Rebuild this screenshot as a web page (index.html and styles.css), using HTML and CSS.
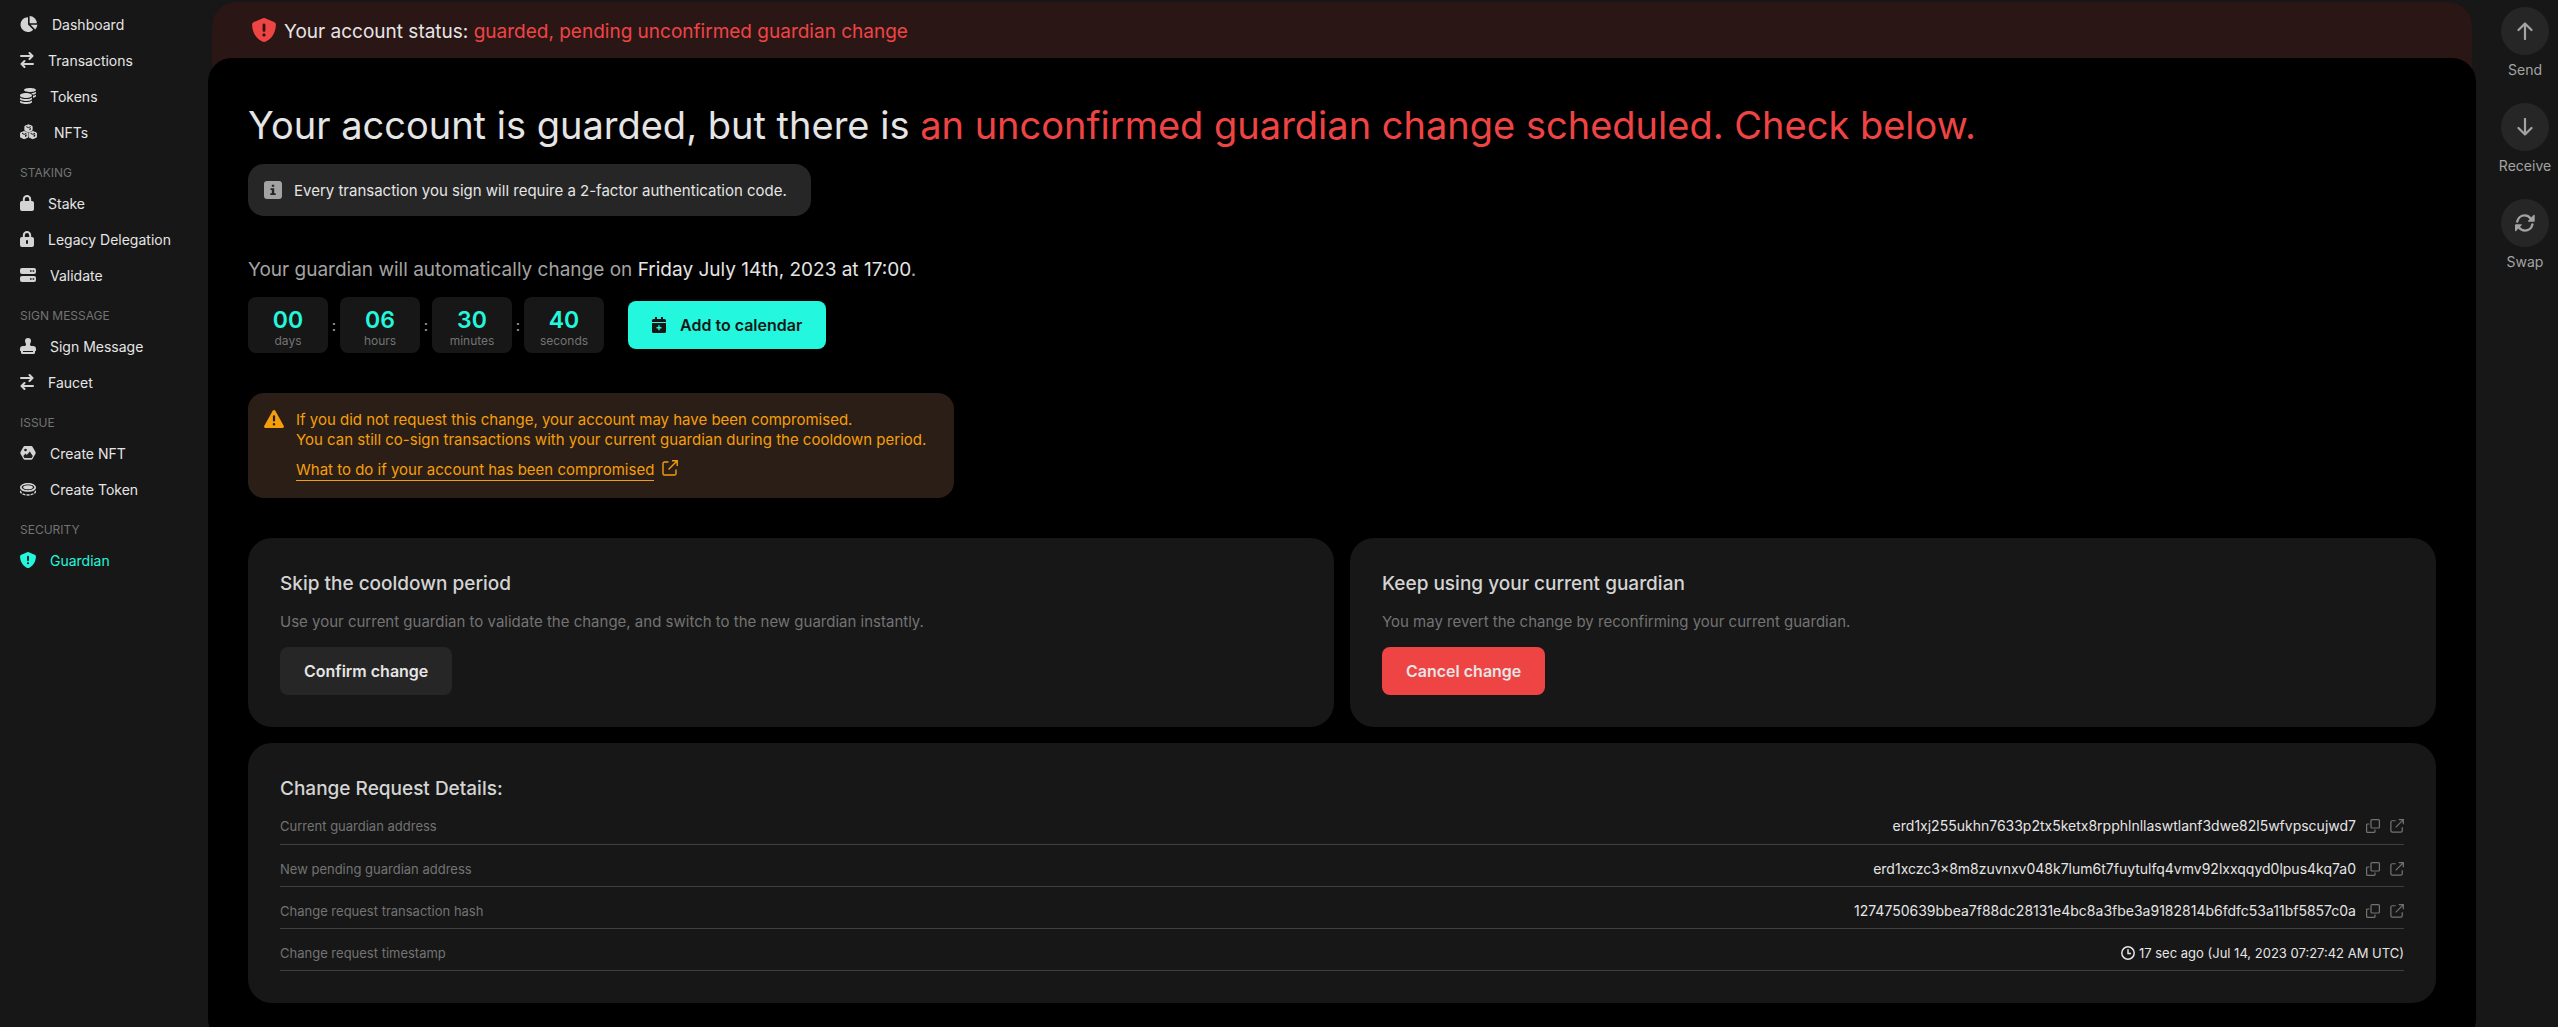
FILE: index.html
```html
<!DOCTYPE html>
<html lang="en">
<head>
<meta charset="utf-8">
<meta name="viewport" content="width=device-width, initial-scale=1">
<title>Guardian</title>
<link rel="stylesheet" href="styles.css">
</head>
<body>
<svg class="sprite" aria-hidden="true">
  <symbol id="i-pie" viewBox="0 0 18 16"><path d="M8 1.2V8.6l5.2 5.2A7.4 7.4 0 1 1 8 1.2z"/><path d="M9.6 0A7.3 7.3 0 0 1 16.8 7.2H9.6z"/><path d="M10.6 8.8H17.400A7.300 7.300 0 0 1 15.200 13.400z"/></symbol>
  <symbol id="i-swap" viewBox="0 0 14 16"><path d="M1 4h11M9.500 1l3 3-3 3M13 12H2M4.500 9l-3 3 3 3" fill="none" stroke="currentColor" stroke-width="2" stroke-linecap="round" stroke-linejoin="round"/></symbol>
  <symbol id="i-coins" viewBox="0 0 512 512"><path d="M0 405.300V448c0 35.300 86 64 192 64s192-28.700 192-64v-42.700C342.700 434.400 267.200 448 192 448S41.300 434.400 0 405.300zM320 128c106 0 192-28.700 192-64S426 0 320 0 128 28.700 128 64s86 64 192 64zM0 300.400V352c0 35.300 86 64 192 64s192-28.700 192-64v-51.600c-41.300 34-116.900 51.600-192 51.600S41.300 334.400 0 300.400zm416 11c57.300-11.100 96-31.700 96-55.400v-42.700c-23.200 16.400-57.300 27.600-96 34.500v63.600zM192 160C86 160 0 195.800 0 240s86 80 192 80 192-35.800 192-80-86-80-192-80zm219.300 56.300c60-10.800 100.700-32 100.700-56.300v-42.700c-35.500 25.100-96.500 38.600-160.700 41.800 29.500 14.300 51.200 33.500 60 57.200z"/></symbol>
  <symbol id="i-cubes" viewBox="0 0 20 16"><g stroke-linejoin="round"><path d="M8.500.8l3.600 1.400v4.200L8.500 8 4.900 6.400V2.200zM4.200 7.500l3.600 1.400v4.300l-3.600 1.500-3.600-1.500V8.900zM12.800 7.500l3.600 1.400v4.300l-3.600 1.500-3.600-1.500V8.900z" stroke="currentColor"/><path d="M6.300 2.700l2.200.9 2.200-.9M2 9.400l2.200.9 2.200-.9M10.600 9.400l2.200.9 2.200-.9" fill="none" stroke="#171717" stroke-width="1"/><path d="M9.300 6.300V4.700l1.600-.7v1.600zM5 13v-2l1.600-.7v2zM13.600 13v-2l1.600-.7v2z" fill="#171717"/></g></symbol>
  <symbol id="i-lock" viewBox="0 0 14 16"><path d="M3.800 7V4.200a3.200 3.200 0 0 1 6.400 0V7" fill="none" stroke="currentColor" stroke-width="2"/><rect y="6" width="14" height="10" rx="2"/></symbol>
  <symbol id="i-lockkey" viewBox="0 0 14 16"><path d="M3.800 7V4.200a3.200 3.200 0 0 1 6.400 0V7" fill="none" stroke="currentColor" stroke-width="2"/><rect y="6" width="14" height="10" rx="2"/><rect x="6" y="9" width="2" height="4" rx="1" fill="#171717"/></symbol>
  <symbol id="i-server" viewBox="0 0 16 16"><rect y="1" width="16" height="6" rx="2"/><rect y="9" width="16" height="6" rx="2"/><path d="M10 3.200h1.600v1.600H10zM12.600 3.200h1.600v1.600h-1.600zM10 11.200h1.600v1.600H10zM12.600 11.200h1.600v1.600h-1.600z" fill="#171717"/></symbol>
  <symbol id="i-stamp" viewBox="0 0 16 16"><path d="M8 0a3 3 0 0 1 3 3c0 1.300-1 2.200-1 3.600 0 .9.500 1.400 1.300 1.400H13a3 3 0 0 1 3 3v1.400c0 .5-.4.800-1 .8v1.600c0 .700-.5 1.200-1.200 1.200H2.200c-.7 0-1.200-.5-1.200-1.200v-1.600c-.6 0-1-.3-1-.8V11a3 3 0 0 1 3-3h1.700C5.500 8 6 7.500 6 6.600 6 5.200 5 4.300 5 3a3 3 0 0 1 3-3z"/><path d="M3 13.500h10" stroke="#171717"/></symbol>
  <symbol id="i-nft" viewBox="0 0 16 16"><path d="M4.700 1h6.600q.8 0 1.200.7L15.500 7q.4.900 0 1.800l-3 5.300q-.4.700-1.200.7H4.700q-.8 0-1.200-.7L.5 8.800q-.4-.9 0-1.800l3-5.300Q3.900 1 4.700 1z"/><circle cx="5.500" cy="5" r="1.300" fill="#171717"/><path d="M3.300 11l2.200-2.500 1.300 1.400L9.800 6.500 12.800 11l-1 2.100H4.400z" fill="#171717" opacity=".95"/></symbol>
  <symbol id="i-coin" viewBox="0 0 16 16"><path fill-rule="evenodd" d="M8 2c4.400 0 8 1.900 8 4.400s-3.600 4.400-8 4.400-8-1.900-8-4.400S3.600 2 8 2zm0 1.400C4.500 3.400 1.700 4.700 1.700 6.300S4.500 9.200 8 9.200s6.300-1.300 6.300-2.900S11.500 3.400 8 3.400z"/><ellipse cx="8" cy="6.300" rx="4.800" ry="2"/><path d="M.6 9.800v1.300C1.800 12.900 4.700 14 8 14s6.200-1.100 7.400-2.900V9.800" fill="none" stroke="currentColor" stroke-width="1.300" stroke-dasharray="3 1"/></symbol>
  <symbol id="i-shield" viewBox="0 0 24 24"><path fill-rule="evenodd" d="M12 0c.4 0 .8.100 1.100.2l9 3.800c1 .4 1.800 1.500 1.800 2.800-.1 4.600-1.900 13-9.900 16.700-1.200.6-2.700.6-3.900 0C2.100 19.800.1 11.400.1 6.800.1 5.500.9 4.400 1.900 4l9-3.800C11.200.100 11.600 0 12 0zm0 5.600c-.8 0-1.400.6-1.400 1.400v5.400c0 .8.600 1.400 1.400 1.400s1.400-.6 1.400-1.400V7c0-.8-.6-1.400-1.400-1.400zm0 9.700a1.600 1.600 0 1 0 0 3.200 1.600 1.600 0 0 0 0-3.200z"/></symbol>
  <symbol id="i-info" viewBox="0 0 18 18"><rect width="18" height="18" rx="3"/><path d="M7.800 3.800h2.400v2H7.800zM6.500 7.300h3.700v5h1.500v1.700H6.300v-1.700h1.500V9H6.500z" fill="#262626"/></symbol>
  <symbol id="i-cal" viewBox="0 0 14 16"><path d="M3 0h2v2h4V0h2v2h1.500A1.500 1.500 0 0 1 14 3.500V5H0V3.500A1.500 1.500 0 0 1 1.500 2H3zM0 6h14v8.500a1.500 1.500 0 0 1-1.500 1.500h-11A1.500 1.500 0 0 1 0 14.500z"/><path d="M7 8.300v5M4.500 10.800h5" stroke="#23f7dd" stroke-width="1.400"/></symbol>
  <symbol id="i-warn" viewBox="0 0 20 18"><path fill-rule="evenodd" d="M10 0c.5 0 1 .3 1.300.8l8.400 14.900c.6 1-.1 2.300-1.300 2.300H1.600c-1.200 0-1.900-1.300-1.300-2.300L8.700.8C9 .3 9.500 0 10 0zm0 5.200c-.6 0-1.100.5-1.100 1.100v4.200a1.100 1.100 0 0 0 2.200 0V6.300c0-.6-.5-1.100-1.100-1.100zm0 7.800a1.300 1.300 0 1 0 0 2.600 1.300 1.300 0 0 0 0-2.600z"/></symbol>
  <symbol id="i-ext" viewBox="0 0 16 16"><path d="M6.500 2H2.600C1.700 2 1 2.700 1 3.600v9.800c0 .9.700 1.600 1.600 1.600h9.800c.9 0 1.600-.7 1.600-1.600V9.500M10 .8h5.200V6M15 1L6.500 9.500" fill="none" stroke="currentColor" stroke-width="1.400"/></symbol>
  <symbol id="i-copy" viewBox="0 0 14 14"><rect x="5" y=".6" width="8.400" height="8.400" rx="1" fill="none" stroke="currentColor" stroke-width="1.200"/><path d="M3.500 5H1.600a1 1 0 0 0-1 1v6.400a1 1 0 0 0 1 1H8a1 1 0 0 0 1-1v-1.900" fill="none" stroke="currentColor" stroke-width="1.200"/></symbol>
  <symbol id="i-clock" viewBox="0 0 14 14"><circle cx="7" cy="7" r="6.200" fill="none" stroke="currentColor" stroke-width="1.500"/><path d="M7 3.200V7.400h3" fill="none" stroke="currentColor" stroke-width="1.500"/></symbol>
  <symbol id="i-up" viewBox="0 0 16 18"><path d="M8 17V1.500M1.500 8L8 1.500 14.500 8" fill="none" stroke="currentColor" stroke-width="2.200" stroke-linecap="round" stroke-linejoin="round"/></symbol>
  <symbol id="i-down" viewBox="0 0 16 18"><path d="M8 1v15.500M1.500 10L8 16.500 14.500 10" fill="none" stroke="currentColor" stroke-width="2.200" stroke-linecap="round" stroke-linejoin="round"/></symbol>
  <symbol id="i-rotate" viewBox="0 0 20 18"><path d="M2.200 7.500C3 4 6 1.400 9.700 1.400c2.500 0 4.400 1.100 6 3M17.400 10.500c-.8 3.500-3.800 6.100-7.500 6.100-2.500 0-4.400-1.100-6-3" fill="none" stroke="currentColor" stroke-width="2.400" stroke-linecap="round"/><path d="M18.800.8c.5-.2.900 0 .9.600v5.500c0 .500-.3.800-.8.800h-5.400c-.6 0-.8-.5-.4-.9zM.8 17.200c-.5.200-.8 0-.8-.6v-5.500c0-.5.300-.8.800-.8h5.400c.6 0 .8.500.4.900z"/></symbol>
</svg>

<div class="shell">
  <nav class="sidebar" aria-label="Main">
    <a class="nav-item" href="#"><svg class="w18"><use href="#i-pie"/></svg>Dashboard</a>
    <a class="nav-item" href="#"><svg class="w14"><use href="#i-swap"/></svg>Transactions</a>
    <a class="nav-item" href="#"><svg class="w16"><use href="#i-coins"/></svg>Tokens</a>
    <a class="nav-item" href="#"><svg class="w20"><use href="#i-cubes"/></svg>NFTs</a>
    <h2 class="nav-title">STAKING</h2>
    <a class="nav-item" href="#"><svg class="w14"><use href="#i-lock"/></svg>Stake</a>
    <a class="nav-item" href="#"><svg class="w14"><use href="#i-lockkey"/></svg>Legacy Delegation</a>
    <a class="nav-item" href="#"><svg class="w16"><use href="#i-server"/></svg>Validate</a>
    <h2 class="nav-title">SIGN MESSAGE</h2>
    <a class="nav-item" href="#"><svg class="w16"><use href="#i-stamp"/></svg>Sign Message</a>
    <a class="nav-item" href="#"><svg class="w14"><use href="#i-swap"/></svg>Faucet</a>
    <h2 class="nav-title">ISSUE</h2>
    <a class="nav-item" href="#"><svg class="w16"><use href="#i-nft"/></svg>Create NFT</a>
    <a class="nav-item" href="#"><svg class="w16"><use href="#i-coin"/></svg>Create Token</a>
    <h2 class="nav-title">SECURITY</h2>
    <a class="nav-item active" href="#"><svg class="w16"><use href="#i-shield"/></svg>Guardian</a>
  </nav>

  <div class="center">
    <div class="banner">
      <svg class="banner-icon"><use href="#i-shield"/></svg>
      <p>Your account status: <span class="red">guarded, pending unconfirmed guardian change</span></p>
    </div>
    <main class="panel">
      <h1>Your account is guarded, but there is <span class="red">an unconfirmed guardian change scheduled. Check below.</span></h1>
      <div class="note"><svg class="note-icon"><use href="#i-info"/></svg>Every transaction you sign will require a 2-factor authentication code.</div>

      <p class="when">Your guardian will automatically change on <time>Friday July 14th, 2023 at 17:00</time>.</p>
      <div class="schedule">
        <div class="countdown">
          <div class="unit"><strong>00</strong><span>days</span></div>
          <span class="colon">:</span>
          <div class="unit"><strong>06</strong><span>hours</span></div>
          <span class="colon">:</span>
          <div class="unit"><strong>30</strong><span>minutes</span></div>
          <span class="colon">:</span>
          <div class="unit"><strong>40</strong><span>seconds</span></div>
        </div>
        <button class="btn primary" type="button"><svg class="w14"><use href="#i-cal"/></svg>Add to calendar</button>
      </div>

      <div class="warning">
        <svg class="warning-icon"><use href="#i-warn"/></svg>
        <div>
          <p>If you did not request this change, your account may have been compromised.<br>You can still co-sign transactions with your current guardian during the cooldown period.</p>
          <a class="help" href="#"><span>What to do if your account has been compromised</span><svg class="w16"><use href="#i-ext"/></svg></a>
        </div>
      </div>

      <div class="choices">
        <section class="card">
          <h2>Skip the cooldown period</h2>
          <p>Use your current guardian to validate the change, and switch to the new guardian instantly.</p>
          <button class="btn neutral" type="button">Confirm change</button>
        </section>
        <section class="card">
          <h2>Keep using your current guardian</h2>
          <p>You may revert the change by reconfirming your current guardian.</p>
          <button class="btn danger" type="button">Cancel change</button>
        </section>
      </div>

      <section class="card details">
        <h2>Change Request Details:</h2>
        <table>
          <tr><th scope="row">Current guardian address</th><td><div class="value hash">erd1xj255ukhn7633p2tx5ketx8rpphlnllaswtlanf3dwe82l5wfvpscujwd7<button type="button" aria-label="Copy"><svg><use href="#i-copy"/></svg></button><a href="#" aria-label="Open in explorer"><svg><use href="#i-ext"/></svg></a></div></td></tr>
          <tr><th scope="row">New pending guardian address</th><td><div class="value hash">erd1xczc3x8m8zuvnxv048k7lum6t7fuytulfq4vmv92lxxqqyd0lpus4kq7a0<button type="button" aria-label="Copy"><svg><use href="#i-copy"/></svg></button><a href="#" aria-label="Open in explorer"><svg><use href="#i-ext"/></svg></a></div></td></tr>
          <tr><th scope="row">Change request transaction hash</th><td><div class="value hash">1274750639bbea7f88dc28131e4bc8a3fbe3a9182814b6fdfc53a11bf5857c0a<button type="button" aria-label="Copy"><svg><use href="#i-copy"/></svg></button><a href="#" aria-label="Open in explorer"><svg><use href="#i-ext"/></svg></a></div></td></tr>
          <tr><th scope="row">Change request timestamp</th><td><div class="value stamp"><svg><use href="#i-clock"/></svg>17 sec ago (Jul 14, 2023 07:27:42 AM UTC)</div></td></tr>
        </table>
      </section>
    </main>
  </div>

  <aside class="actions">
    <button type="button"><span class="disc"><svg class="arrow"><use href="#i-up"/></svg></span>Send</button>
    <button type="button"><span class="disc"><svg class="arrow"><use href="#i-down"/></svg></span>Receive</button>
    <button type="button"><span class="disc"><svg class="rotate"><use href="#i-rotate"/></svg></span>Swap</button>
  </aside>
</div>
</body>
</html>
```
FILE: styles.css
```css
* { box-sizing: border-box; margin: 0; padding: 0; }
body { background: #171717; color: #e5e5e5; font-family: Inter, "Liberation Sans", sans-serif; font-size: 15px; }
svg { fill: currentColor; flex: none; display: block; }
a { color: inherit; text-decoration: none; }
button { border: 0; background: none; color: inherit; font-family: inherit; cursor: pointer; }
.sprite { display: none; }
.w14 { width: 14px; height: 16px; }
.w16 { width: 16px; height: 16px; }
.w18 { width: 18px; height: 16px; }
.w20 { width: 20px; height: 16px; }
.red { color: #ef4444; }

.shell { display: flex; height: 100vh; overflow-y: auto; scrollbar-width: none; }

.sidebar { flex: none; width: 208px; padding: 6px 20px; }
.nav-item { display: flex; align-items: center; gap: 14px; height: 36px; font-size: 14px; color: #e5e5e5; white-space: nowrap; }
.nav-item svg { color: #d4d4d4; }
.nav-item.active, .nav-item.active svg { color: #23f7dd; }
.nav-title { padding: 15px 0 4px; font-size: 12px; line-height: 16px; font-weight: 400; color: #737373; }

.center { flex: 1; min-width: 0; padding-top: 2px; }
.banner { display: flex; align-items: center; gap: 8px; height: 96px; margin: 0 4px; padding: 0 40px 40px; background: #2b1616; border-radius: 24px; font-size: 19px; }
.banner p { padding-top: 2px; }
.banner-icon { width: 24px; height: 24px; color: #ef4444; }
.panel { position: relative; margin-top: -40px; padding: 40px; background: #000; border-radius: 24px; }

h1 { font-size: 38px; line-height: 54px; font-weight: 400; }
.note { display: flex; align-items: center; gap: 12px; width: fit-content; height: 52px; margin-top: 12px; padding: 0 24px 0 16px; background: #262626; border-radius: 16px; }
.note-icon { width: 18px; height: 18px; color: #a3a3a3; }

.when { margin-top: 39px; font-size: 19px; line-height: 30px; color: #a3a3a3; }
.when time { color: #e5e5e5; }
.schedule { display: flex; align-items: center; gap: 24px; margin-top: 12px; }
.countdown { display: flex; align-items: center; }
.unit { display: flex; flex-direction: column; align-items: center; width: 80px; height: 56px; padding-top: 9px; background: #171717; border-radius: 8px; }
.unit strong { font-size: 23px; line-height: 28px; font-weight: 600; color: #23f7dd; }
.unit span { font-size: 12px; line-height: 14px; color: #737373; }
.colon { width: 12px; text-align: center; color: #a3a3a3; }

.btn { display: inline-flex; align-items: center; justify-content: center; gap: 14px; height: 48px; padding: 0 24px; border-radius: 8px; font-size: 16px; font-weight: 600; }
.primary { background: #23f7dd; color: #171717; }
.neutral { background: #262626; color: #e5e5e5; }
.danger { background: #ef4444; color: #e5e5e5; }

.warning { display: flex; gap: 12px; width: fit-content; margin-top: 40px; padding: 17px 28px 17px 16px; background: #2b1e16; border-radius: 16px; color: #f59e0b; line-height: 20px; }
.warning-icon { width: 20px; height: 18px; }
.help { display: flex; gap: 8px; width: fit-content; margin-top: 10px; }
.help span { border-bottom: 1px solid; }

.choices { display: grid; grid-template-columns: 1fr 1fr; gap: 16px; margin-top: 40px; }
.card { padding: 33px 32px 32px; background: #171717; border-radius: 24px; }
.card h2 { font-size: 19px; line-height: 26px; font-weight: 500; color: #d4d4d4; }
.card p { margin: 15px 0; line-height: 20px; color: #737373; }

.details { margin-top: 16px; }
table { width: 100%; border-collapse: collapse; font-size: 13px; line-height: 22px; }
th, td { height: 42px; padding: 13px 0 6px; border-bottom: 1px solid #404040; }
th { text-align: left; font-weight: 400; color: #737373; }
.value { display: flex; align-items: center; justify-content: flex-end; gap: 10px; }
.value svg { width: 14px; height: 14px; color: #737373; }
.value.hash { font-size: 14px; }
.value.stamp { gap: 4px; }
.value.stamp svg { color: #e5e5e5; }

.actions { flex: none; width: 82px; padding: 7px 0 0 16px; display: flex; flex-direction: column; gap: 22px; }
.actions button { display: flex; flex-direction: column; align-items: center; gap: 4px; font-size: 14px; line-height: 22px; color: #a3a3a3; }
.disc { display: grid; place-items: center; width: 48px; height: 48px; border-radius: 50%; background: #262626; }
.arrow { width: 16px; height: 18px; }
.rotate { width: 20px; height: 18px; }
```
